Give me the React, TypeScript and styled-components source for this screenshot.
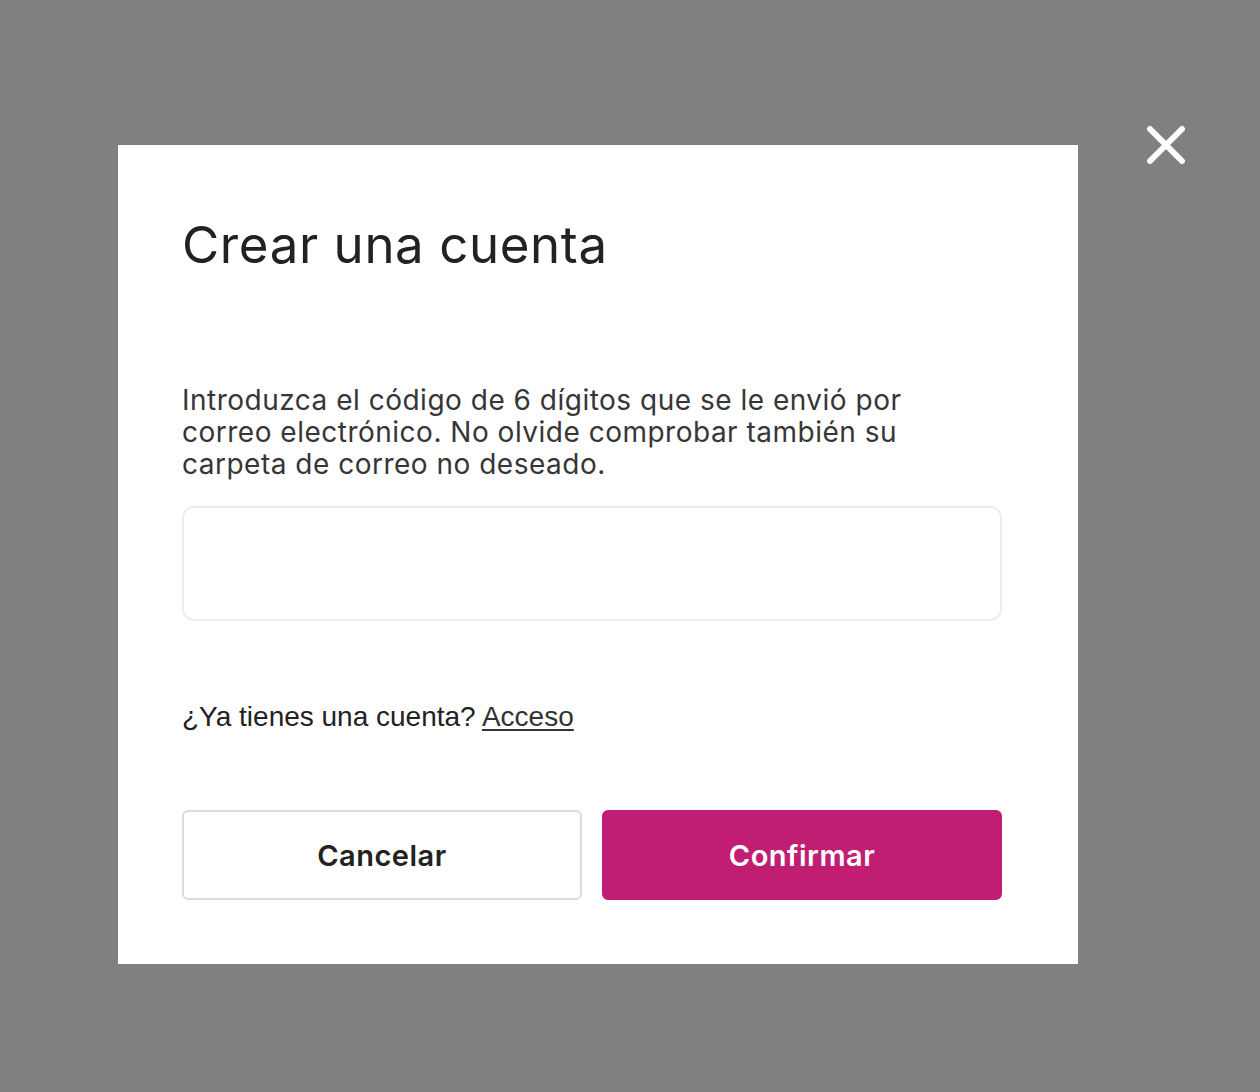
import React, { useState } from 'react'
import styled, { createGlobalStyle } from 'styled-components'

const GlobalStyle = createGlobalStyle`
  html, body {
    margin: 0;
    padding: 0;
    background: #808080;
  }
  * {
    box-sizing: border-box;
  }
`

const Overlay = styled.div`
  position: relative;
  min-height: 1092px;
  background: #808080;
  padding: 145px 0 0 118px;
`

const CloseButton = styled.button`
  position: absolute;
  top: 125px;
  left: 1146px;
  width: 40px;
  height: 40px;
  padding: 0;
  border: none;
  background: transparent;
  cursor: pointer;
  display: flex;
  align-items: center;
  justify-content: center;
`

const Modal = styled.div`
  width: 960px;
  background: #ffffff;
  padding: 64px;
`

const Content = styled.div`
  width: 820px;
  display: flex;
  flex-direction: column;
`

const Title = styled.h1`
  margin: 0;
  font-family: Inter, 'Open Sans', sans-serif;
  font-weight: 400;
  font-size: 51px;
  line-height: 72px;
  letter-spacing: 0.6px;
  color: #222222;
`

const Description = styled.p`
  margin: 103px 0 0;
  font-family: Inter, 'Open Sans', sans-serif;
  font-weight: 400;
  font-size: 28px;
  line-height: 32px;
  color: #363636;
  letter-spacing: 0.5px;
`

const CodeInput = styled.input`
  margin-top: 26px;
  width: 100%;
  height: 115px;
  border: 2px solid #ededed;
  border-radius: 12px;
  outline: none;
  padding: 0 24px;
  font-family: Inter, sans-serif;
  font-size: 28px;
  color: #222;
  background: #fff;
`

const LoginRow = styled.div`
  margin-top: 80px;
  font-family: 'Liberation Sans', Arial, sans-serif;
  font-size: 28px;
  line-height: 32px;
  color: #222222;
`

const LoginLink = styled.a`
  color: #333333;
  text-decoration: underline;
  text-underline-offset: 3px;
  text-decoration-thickness: 2px;
  cursor: pointer;
`

const Actions = styled.div`
  margin-top: 77px;
  display: grid;
  grid-template-columns: 1fr 1fr;
  gap: 20px;
`

const ActionButton = styled.button<{ $primary?: boolean }>`
  height: 90px;
  border-radius: 6px;
  font-family: Inter, 'Open Sans', sans-serif;
  font-weight: 600;
  font-size: 29px;
  letter-spacing: 0.5px;
  cursor: pointer;
  border: 2px solid ${({ $primary }) => ($primary ? '#c11e73' : '#dcdcdc')};
  background: ${({ $primary }) => ($primary ? '#c11e73' : '#ffffff')};
  color: ${({ $primary }) => ($primary ? '#ffffff' : '#222222')};
`

const CloseIcon = () => (
  <svg width="40" height="40" viewBox="0 0 40 40" fill="none">
    <path
      d="M4 4 L36 36 M36 4 L4 36"
      stroke="#ffffff"
      strokeWidth="6"
      strokeLinecap="round"
    />
  </svg>
)

const App: React.FC = () => {
  const [code, setCode] = useState('')

  return (
    <>
      <GlobalStyle />
      <Overlay>
        <CloseButton type="button" aria-label="Cerrar">
          <CloseIcon />
        </CloseButton>
        <Modal>
          <Content>
            <Title>Crear una cuenta</Title>
            <Description>
              Introduzca el código de 6 dígitos que se le envió por
              <br />
              correo electrónico. No olvide comprobar también su
              <br />
              carpeta de correo no deseado.
            </Description>
            <CodeInput
              value={code}
              onChange={(e) => setCode(e.target.value)}
              inputMode="numeric"
              maxLength={6}
            />
            <LoginRow>
              ¿Ya tienes una cuenta? <LoginLink>Acceso</LoginLink>
            </LoginRow>
            <Actions>
              <ActionButton type="button">Cancelar</ActionButton>
              <ActionButton type="button" $primary>
                Confirmar
              </ActionButton>
            </Actions>
          </Content>
        </Modal>
      </Overlay>
    </>
  )
}

export default App
